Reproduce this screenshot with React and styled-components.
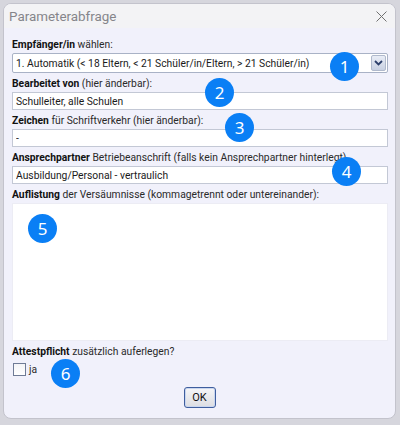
import React, {useState} from 'react';
import styled, {createGlobalStyle} from 'styled-components';

const GlobalStyle = createGlobalStyle`
	html, body {
		margin: 0;
		padding: 0;
		background: #d6d6dd;
	}
	body {
		font-family: Roboto, "Noto Sans", sans-serif;
		font-size: 10.3px;
		color: #1a1a1a;
	}
`;

const Page = styled.div`
	padding: 3px 4px 6px 3px;
`;

const Dialog = styled.div`
	position: relative;
	height: 416px;
	box-sizing: border-box;
	border: 1px solid #c3c3cc;
	border-radius: 8px;
	background: #f1f1fb;
	overflow: hidden;
	display: flex;
	flex-direction: column;
`;

const TitleBar = styled.div`
	height: 26px;
	background: #f3f3f5;
	display: flex;
	align-items: center;
	justify-content: space-between;
	padding: 0 8px 0 5px;
`;

const Title = styled.span`
	font-size: 13.4px;
	color: #85858a;
`;

const Close = styled.svg`
	width: 11px;
	height: 11px;
	margin-top: 1px;
`;

const Body = styled.div`
	padding: 9px 7px 10px 8px;
	display: flex;
	flex-direction: column;
	flex: 1;
`;

const Label = styled.div`
	height: 16px;
	line-height: 16px;
	margin-top: ${props => props.first ? 0 : 3}px;
	white-space: nowrap;
	color: #2a2a2a;
	b {
		font-weight: 700;
		color: #111;
	}
`;

const Select = styled.div`
	height: 20px;
	box-sizing: border-box;
	border: 1px solid #a9b2c6;
	border-radius: 2px;
	background: #fff;
	display: flex;
	align-items: center;
	padding: 0 1px 0 3px;
`;

const SelectText = styled.span`
	flex: 1;
	white-space: nowrap;
`;

const DropButton = styled.div`
	width: 15px;
	height: 16px;
	box-sizing: border-box;
	border: 1px solid #b0b9cc;
	border-radius: 2px;
	background: linear-gradient(#e9edf6, #c8d0e2);
	display: flex;
	align-items: center;
	justify-content: center;
`;

const Input = styled.input`
	height: 18px;
	box-sizing: border-box;
	border: 1px solid #c3c8d5;
	background: #fff;
	padding: 0 3px;
	margin: 0;
	font: inherit;
	color: inherit;
	outline: none;
`;

const TextArea = styled.textarea`
	height: 138px;
	box-sizing: border-box;
	border: 1px solid #ececf4;
	background: #fff;
	margin: 0;
	resize: none;
	font: inherit;
	outline: none;
`;

const CheckRow = styled.label`
	display: flex;
	align-items: center;
	gap: 3px;
	margin-top: 2px;
	padding-left: 1px;
	height: 15px;
	color: #2a2a2a;
`;

const Box = styled.span`
	width: 13px;
	height: 13px;
	box-sizing: border-box;
	border: 1px solid #6f7b96;
	background: linear-gradient(#f4f4f7, #ffffff);
	font-size: 10px;
	line-height: 11px;
	text-align: center;
`;

const Footer = styled.div`
	display: flex;
	justify-content: center;
	margin-top: 10px;
	padding-right: 1px;
`;

const OkButton = styled.button`
	width: 32px;
	height: 21px;
	box-sizing: border-box;
	border: 1px solid #3f5e9e;
	border-radius: 3px;
	background: linear-gradient(#f6f6f8, #dcdde2);
	box-shadow: inset 0 0 0 1px #c9d6ef;
	font: inherit;
	font-size: 11px;
	color: #111;
	padding: 0;
`;

const Marker = styled.div`
	position: absolute;
	width: 29px;
	height: 29px;
	border-radius: 50%;
	background: #0a7ff5;
	color: #fff;
	font-family: "Noto Sans", sans-serif;
	font-size: 17px;
	line-height: 29px;
	text-align: center;
`;

const markers = [
	{n: 1, x: 326, y: 48},
	{n: 2, x: 201, y: 74},
	{n: 3, x: 221, y: 109},
	{n: 4, x: 328, y: 153},
	{n: 5, x: 24, y: 210},
	{n: 6, x: 47, y: 355},
];

function App() {
	const [checked, setChecked] = useState(false);

	return (
		<Page>
			<GlobalStyle/>
			<Dialog>
				<TitleBar>
					<Title>Parameterabfrage</Title>
					<Close viewBox="0 0 11 11">
						<path d="M0.5 0.5 L10.5 10.5 M10.5 0.5 L0.5 10.5" stroke="#707070" strokeWidth="1"/>
					</Close>
				</TitleBar>
				<Body>
					<Label first><b>Empfänger/in</b> wählen:</Label>
					<Select>
						<SelectText>1. Automatik (&lt; 18 Eltern, &lt; 21 Schüler/in/Eltern, &gt; 21 Schüler/in)</SelectText>
						<DropButton>
							<svg width="9" height="6" viewBox="0 0 9 6">
								<path d="M1 1 L4.5 4.5 L8 1" stroke="#2c3f6b" strokeWidth="1.8" fill="none"/>
							</svg>
						</DropButton>
					</Select>

					<Label><b>Bearbeitet von</b> (hier änderbar):</Label>
					<Input defaultValue="Schulleiter, alle Schulen"/>

					<Label><b>Zeichen</b> für Schriftverkehr (hier änderbar):</Label>
					<Input defaultValue="-"/>

					<Label><b>Ansprechpartner</b> Betriebeanschrift (falls kein Ansprechpartner hinterlegt)</Label>
					<Input defaultValue="Ausbildung/Personal - vertraulich"/>

					<Label><b>Auflistung</b> der Versäumnisse (kommagetrennt oder untereinander):</Label>
					<TextArea/>

					<Label><b>Attestpflicht</b> zusätzlich auferlegen?</Label>
					<CheckRow onClick={() => setChecked(!checked)}>
						<Box>{checked ? '✓' : null}</Box>
						ja
					</CheckRow>

					<Footer>
						<OkButton>OK</OkButton>
					</Footer>
				</Body>
				{markers.map(m => (
					<Marker key={m.n} style={{left: m.x, top: m.y}}>{m.n}</Marker>
				))}
			</Dialog>
		</Page>
	);
}

export default App;
